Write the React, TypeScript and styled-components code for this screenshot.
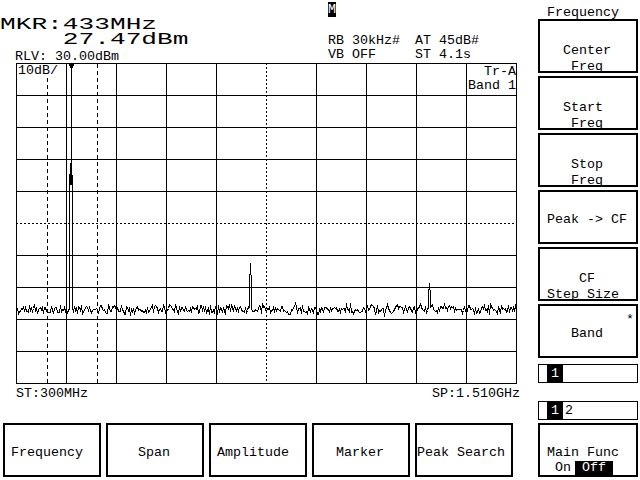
import React from "react";
import styled, { createGlobalStyle } from "styled-components";

const GlobalStyle = createGlobalStyle`
  html, body {
    margin: 0;
    padding: 0;
    background: #fff;
  }
  body {
    font-family: "Liberation Mono", "DejaVu Sans Mono", monospace;
    font-size: 13.333px;
    color: #000;
  }
`;

// key captions sit in a 10 character field, centred on whole characters
const FIELD = 10;
const field = (s: string) =>
    " ".repeat(Math.max(0, Math.floor((FIELD - s.length) / 2))) + s;

const Screen = styled.div`
    width: 640px;
    height: 480px;
    display: flex;
    overflow: hidden;
    background: #fff;
`;

const MainArea = styled.div`
    width: 533px;
    flex: none;
    display: flex;
    flex-direction: column;
`;

const Header = styled.div`
    height: 62px;
    flex: none;
    display: flex;
`;

const Readout = styled.div`
    width: 328px;
    flex: none;
    padding-top: 19px;
    box-sizing: border-box;
`;

const BigLine = styled.div`
    font-size: 15px;
    line-height: 14.5px;
    white-space: pre;
    transform: scale(1.745, 1.05);
    transform-origin: left;
`;

const SmallLine = styled.div<{ $indent?: number }>`
    line-height: 14px;
    white-space: pre;
    margin-top: 1.5px;
    padding-left: ${p => p.$indent ?? 0}px;
`;

const Settings = styled.div`
    padding-top: 2px;
`;

const MarkerBadge = styled.div`
    width: 8px;
    height: 15px;
    line-height: 15px;
    background: #000;
    color: #fff;
    text-align: center;
    overflow: hidden;
`;

const SettingsGrid = styled.div`
    margin-top: 17px;
    display: grid;
    grid-template-columns: 87px auto;
    line-height: 13.5px;
    white-space: pre;
`;

const ChartFrame = styled.div`
    position: relative;
    margin-left: 15px;
    width: 504px;
    height: 324px;
    flex: none;
`;

const ChartLabel = styled.div<{ $right?: boolean }>`
    position: absolute;
    top: ${p => (p.$right ? 3 : 2)}px;
    ${p => (p.$right ? "right: 3px;" : "left: 3px;")}
    line-height: 14px;
    text-align: ${p => (p.$right ? "right" : "left")};
    background: #fff;
    white-space: pre;
`;

const ScaleRow = styled.div`
    margin: 1px 0 0 16px;
    width: 504px;
    display: flex;
    justify-content: space-between;
    line-height: 14px;
`;

const KeyRow = styled.div`
    margin-top: 22px;
    padding-left: 3px;
    display: flex;
    gap: 5px;
`;

const MenuKey = styled.div<{ $wide?: boolean }>`
    width: 98px;
    height: 54px;
    box-sizing: border-box;
    border: 2px solid #000;
    display: flex;
    align-items: center;
    padding: 5px 0 0 ${p => (p.$wide ? 0 : 6)}px;
    line-height: 16px;
    white-space: pre;
`;

const SidePanel = styled.div`
    width: 100px;
    flex: none;
    margin-left: 5px;
    display: flex;
    flex-direction: column;
`;

const PanelTitle = styled.div`
    padding: 6px 0 0 9px;
    line-height: 13px;
    white-space: pre;
`;

const SideKeys = styled.div`
    display: flex;
    flex-direction: column;
    gap: 3px;
`;

const SideKey = styled.div<{ $single?: boolean }>`
    position: relative;
    height: 54px;
    box-sizing: border-box;
    border: 2px solid #000;
    padding: ${p => (p.$single ? 6 : 0)}px 0 0 7px;
    display: flex;
    flex-direction: column;
    justify-content: ${p => (p.$single ? "center" : "flex-end")};
`;

// two-line captions rest their last line on the bottom edge of the key
const KeyLabel = styled.div<{ $single?: boolean }>`
    margin-bottom: ${p => (p.$single ? 0 : -4)}px;
`;

const KeyText = styled.div`
    line-height: 16px;
    white-space: pre;
`;

const Flag = styled.span`
    position: absolute;
    top: 7px;
    right: 2px;
    line-height: 14px;
`;

const Indicator = styled.div<{ $gap: number }>`
    margin-top: ${p => p.$gap}px;
    height: 19px;
    box-sizing: border-box;
    border: 1px solid #000;
    padding-left: 8px;
    display: flex;
    line-height: 17px;
`;

const Lit = styled.span`
    display: inline-block;
    width: 16px;
    text-align: center;
    background: #000;
    color: #fff;
`;

const Unlit = styled.span`
    margin-left: 2px;
`;

const MainKey = styled.div`
    margin-top: 3px;
    height: 54px;
    box-sizing: border-box;
    border: 2px solid #000;
    padding-left: 7px;
    display: flex;
    flex-direction: column;
    justify-content: flex-end;
`;

const ToggleRow = styled.div`
    display: flex;
    height: 14px;
    line-height: 14px;
`;

const ToggleOption = styled.span<{ $on?: boolean }>`
    white-space: pre;
    ${p =>
        p.$on
            ? "margin-left: 4px; padding: 0 7px; background: #000; color: #fff;"
            : "padding-left: 8px;"}
`;

type SideKeyModel = { lines: string[]; flag?: string };

const sideKeys: SideKeyModel[] = [
    { lines: ["Center", "Freq"] },
    { lines: ["Start ", "Freq"] },
    { lines: ["Stop", "Freq"] },
    { lines: ["Peak -> CF"] },
    { lines: ["CF", "Step Size"] },
    { lines: ["Band"], flag: "*" },
];

const menuKeys = ["Frequency", "Span", "Amplitude", "Marker", "Peak Search"];

// ---- trace ----

const BASE = 309;

// spikes: pixel column -> y values the trace passes through at that column
const spikes: Record<number, number[]> = {
    69: [BASE, 185],
    70: [163],
    71: [163],
    72: [185, BASE - 1],
    249: [BASE - 2, 285],
    250: [263],
    251: [285, BASE - 1],
    428: [BASE - 3, 295],
    429: [283],
    430: [295, BASE - 2],
};

const tracePoints = (() => {
    let seed = 20240611;
    const rnd = () => {
        seed = (Math.imul(seed, 1103515245) + 12345) >>> 0;
        return (seed & 0x7fffffff) / 0x7fffffff;
    };
    const pts: string[] = [];
    for (let x = 17; x <= 516; x++) {
        const noise = Math.round(BASE + (rnd() + rnd() + rnd() - 1.5) * 5);
        const ys = spikes[x] ?? [noise];
        ys.forEach(y => pts.push(`${x + 0.5},${y + 0.5}`));
    }
    return pts.join(" ");
})();

const GRID_X = Array.from({ length: 11 }, (_, i) => 16 + i * 50);
const GRID_Y = Array.from({ length: 11 }, (_, i) => 63 + i * 32);

const Chart = () => (
    <svg width={504} height={324} viewBox="15 62 504 324" shapeRendering="crispEdges">
        {GRID_X.map((x, i) => (
            <line key={`v${x}`} x1={x + 0.5} y1={63} x2={x + 0.5} y2={384}
                stroke="#000" strokeDasharray={i === 5 ? "2 2" : undefined} />
        ))}
        {GRID_Y.map((y, i) => (
            <line key={`h${y}`} x1={16} y1={y + 0.5} x2={517} y2={y + 0.5}
                stroke="#000" strokeDasharray={i === 5 ? "2 2" : undefined} />
        ))}
        {[47, 97].map(x => (
            <line key={`d${x}`} x1={x + 0.5} y1={64} x2={x + 0.5} y2={383}
                stroke="#000" strokeDasharray="4 3" />
        ))}
        <line x1={71.5} y1={68} x2={71.5} y2={165} stroke="#000" />
        <rect x={70} y={163} width={2} height={22} fill="#000" />
        <polygon points="68,63 75,63 71.5,69.5" fill="#000" />
        <polyline points={tracePoints} fill="none" stroke="#000" />
    </svg>
);

const App = () => (
    <Screen>
        <GlobalStyle />
        <MainArea>
            <Header>
                <Readout>
                    <BigLine>MKR:433MHz</BigLine>
                    <BigLine>{"    27.47dBm"}</BigLine>
                    <SmallLine $indent={15}>RLV: 30.00dBm</SmallLine>
                </Readout>
                <Settings>
                    <MarkerBadge>M</MarkerBadge>
                    <SettingsGrid>
                        <span>RB 30kHz#</span>
                        <span>AT 45dB#</span>
                        <span>VB OFF</span>
                        <span>ST 4.1s</span>
                    </SettingsGrid>
                </Settings>
            </Header>
            <ChartFrame>
                <Chart />
                <ChartLabel>10dB/</ChartLabel>
                <ChartLabel $right>{"Tr-A\nBand 1"}</ChartLabel>
            </ChartFrame>
            <ScaleRow>
                <span>ST:300MHz</span>
                <span>SP:1.510GHz</span>
            </ScaleRow>
            <KeyRow>
                {menuKeys.map(k => (
                    <MenuKey key={k} $wide={k.length > FIELD}>{field(k)}</MenuKey>
                ))}
            </KeyRow>
        </MainArea>
        <SidePanel>
            <PanelTitle>{field("Frequency")}</PanelTitle>
            <SideKeys>
                {sideKeys.map(k => {
                    const single = k.lines.length === 1;
                    return (
                        <SideKey key={k.lines.join()} $single={single}>
                            <KeyLabel $single={single}>
                                {k.lines.map(l => (
                                    <KeyText key={l}>{field(l)}</KeyText>
                                ))}
                            </KeyLabel>
                            {k.flag && <Flag>{k.flag}</Flag>}
                        </SideKey>
                    );
                })}
            </SideKeys>
            <Indicator $gap={6}>
                <Lit>1</Lit>
            </Indicator>
            <Indicator $gap={18}>
                <Lit>1</Lit>
                <Unlit>2</Unlit>
            </Indicator>
            <MainKey>
                <KeyText>{field("Main Func")}</KeyText>
                <ToggleRow>
                    <ToggleOption>On</ToggleOption>
                    <ToggleOption $on>Off</ToggleOption>
                </ToggleRow>
            </MainKey>
        </SidePanel>
    </Screen>
);

export default App;
